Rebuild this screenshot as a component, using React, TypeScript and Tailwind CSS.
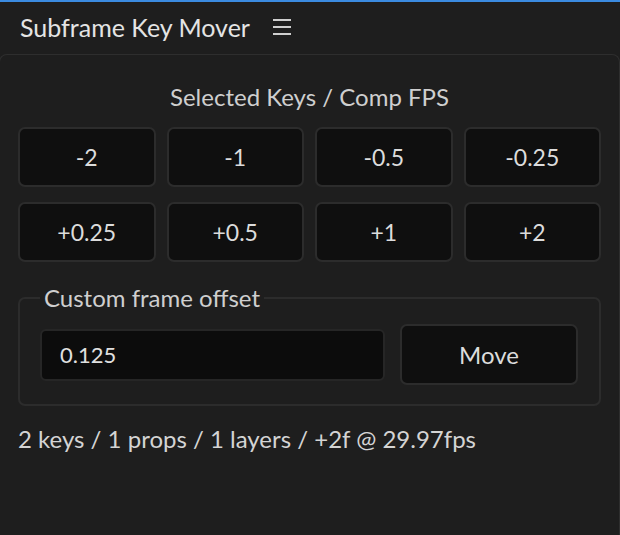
const font = { fontFamily: "Lato, 'Open Sans', sans-serif" };

const offsets = ["-2", "-1", "-0.5", "-0.25", "+0.25", "+0.5", "+1", "+2"];

function KeyButton({ label }: { label: string }) {
  return (
    <button className="h-[60px] rounded-[7px] border-2 border-[#2c2c2c] bg-[#0f0f0f] text-[23px] text-[#dcdcdc]">
      {label}
    </button>
  );
}

export default function App() {
  return (
    <div
      className="flex h-[535px] w-[620px] flex-col overflow-hidden border-t-2 border-[#3b8be0] bg-[#1e1e1e]"
      style={font}
    >
      {/* Header */}
      <div className="flex h-[52px] items-center px-[20px] pb-[3px]">
        <span className="text-[25px] leading-[30px] text-[#e4e4e4]">Subframe Key Mover</span>
        <svg className="ml-[22px] h-[20px] w-[20px]" viewBox="0 0 20 20" fill="none">
          <path d="M1 3h18M1 10h18M1 17h18" stroke="#cfcfcf" strokeWidth={2.2} />
        </svg>
      </div>

      {/* Panel */}
      <div className="-ml-px flex-1 rounded-t-[8px] border border-b-0 border-[#2e2e2e] px-[18px] pt-[27px]">
        <div className="h-[30px] text-center text-[24px] leading-[30px] text-[#cfcfcf]">
          Selected Keys / Comp FPS
        </div>

        <div className="mt-[15px] grid grid-cols-4 gap-x-[11px] gap-y-[15px]">
          {offsets.map((o) => (
            <KeyButton key={o} label={o} />
          ))}
        </div>

        <fieldset className="mt-[23px] rounded-[7px] border-2 border-[#2c2c2c] pb-[19px] pl-[20px] pr-[21px] pt-[13px]">
          <legend className="px-[4px] text-[24px] leading-[26px] text-[#cfcfcf]">
            Custom frame offset
          </legend>
          <div className="flex items-center gap-[15px]">
            <div className="flex h-[52px] flex-1 items-center rounded-[6px] border-2 border-[#262626] bg-[#0c0c0c] px-[18px] text-[22px] text-[#e0e0e0]">
              0.125
            </div>
            <button className="h-[61px] w-[178px] rounded-[7px] border-2 border-[#2c2c2c] bg-[#0f0f0f] text-[24px] text-[#dcdcdc]">
              Move
            </button>
          </div>
        </fieldset>

        <div className="mt-[20px] text-[24px] leading-[26px] text-[#d4d4d4]">
          2 keys / 1 props / 1 layers / +2f @ 29.97fps
        </div>
      </div>
    </div>
  );
}
